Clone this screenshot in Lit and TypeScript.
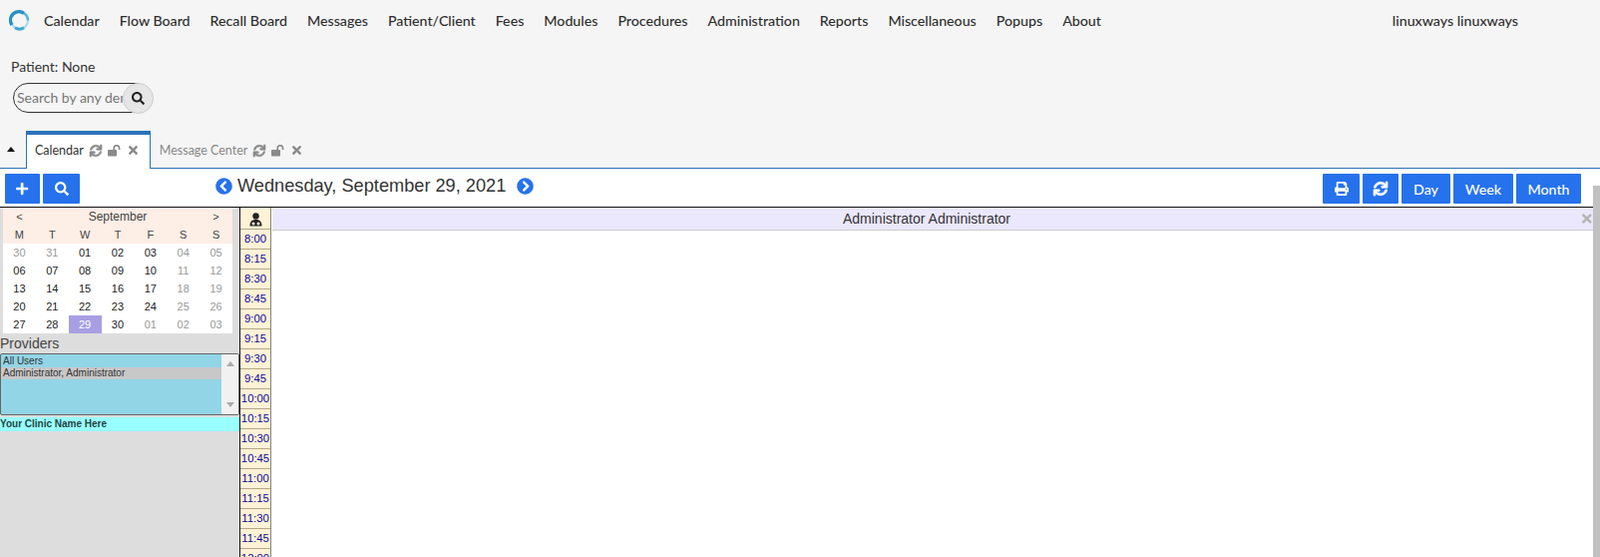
import { LitElement, html, css } from "lit";
import { customElement } from "lit/decorators.js";

const ic = (w: number, d: string, cls = "") =>
  html`<svg class="ic ${cls}" viewBox="0 0 ${w} 512"><path d=${d} fill="currentColor"></path></svg>`;

const P = {
  search: "M505 442.7L405.3 343c-4.5-4.5-10.6-7-17-7H372c27.6-35.3 44-79.7 44-128C416 93.1 322.9 0 208 0S0 93.1 0 208s93.1 208 208 208c48.3 0 92.7-16.4 128-44v16.3c0 6.4 2.5 12.5 7 17l99.7 99.7c9.4 9.4 24.6 9.4 33.9 0l28.3-28.3c9.4-9.4 9.4-24.6.1-34zM208 336c-70.7 0-128-57.2-128-128 0-70.7 57.2-128 128-128 70.7 0 128 57.2 128 128 0 70.7-57.2 128-128 128z",
  plus: "M416 208H272V64c0-17.67-14.33-32-32-32h-32c-17.67 0-32 14.33-32 32v144H32c-17.67 0-32 14.33-32 32v32c0 17.67 14.33 32 32 32h144v144c0 17.67 14.33 32 32 32h32c17.67 0 32-14.33 32-32V304h144c17.67 0 32-14.33 32-32v-32c0-17.67-14.33-32-32-32z",
  times: "M242.72 256l100.07-100.07c12.28-12.28 12.28-32.19 0-44.48l-22.24-22.24c-12.28-12.28-32.19-12.28-44.48 0L176 189.28 75.93 89.21c-12.28-12.28-32.19-12.28-44.48 0L9.21 111.45c-12.28 12.28-12.28 32.19 0 44.48L109.28 256 9.21 356.07c-12.28 12.28-12.28 32.19 0 44.48l22.24 22.24c12.28 12.28 32.2 12.28 44.48 0L176 322.72l100.07 100.07c12.28 12.28 32.2 12.28 44.48 0l22.24-22.24c12.28-12.28 12.28-32.19 0-44.48L242.72 256z",
  print: "M448 192V77.25c0-8.49-3.37-16.62-9.37-22.63L393.37 9.37c-6-6-14.14-9.37-22.63-9.37H96C78.33 0 64 14.33 64 32v160c-35.35 0-64 28.65-64 64v112c0 8.84 7.16 16 16 16h48v96c0 17.67 14.33 32 32 32h320c17.67 0 32-14.33 32-32v-96h48c8.84 0 16-7.16 16-16V256c0-35.35-28.65-64-64-64zm-64 256H128v-96h256v96zm0-224H128V64h192v48c0 8.84 7.16 16 16 16h48v96zm48 72c-13.25 0-24-10.75-24-24 0-13.26 10.75-24 24-24s24 10.74 24 24c0 13.25-10.75 24-24 24z",
  sync: "M440.65 12.57l4 82.77A247.16 247.16 0 0 0 255.83 8C134.73 8 33.91 94.92 12.29 209.82A12 12 0 0 0 24.09 224h49.05a12 12 0 0 0 11.67-9.26 175.91 175.91 0 0 1 317-56.94l-101.46-4.86a12 12 0 0 0-12.57 12v47.41a12 12 0 0 0 12 12H500a12 12 0 0 0 12-12V12a12 12 0 0 0-12-12h-47.37a12 12 0 0 0-11.98 12.57zM255.83 432a175.61 175.61 0 0 1-146-77.8l101.8 4.87a12 12 0 0 0 12.57-12v-47.4a12 12 0 0 0-12-12H12a12 12 0 0 0-12 12V500a12 12 0 0 0 12 12h47.35a12 12 0 0 0 12-12.6l-4.15-82.57A247.17 247.17 0 0 0 255.83 504c121.11 0 221.93-86.92 243.55-201.82a12 12 0 0 0-11.8-14.18h-49.05a12 12 0 0 0-11.67 9.26A175.86 175.86 0 0 1 255.83 432z",
  left: "M256 504C119 504 8 393 8 256S119 8 256 8s248 111 248 248-111 248-248 248zM142.1 273l135.5 135.5c9.4 9.4 24.6 9.4 33.9 0l17-17c9.4-9.4 9.4-24.6 0-33.9L226.9 256l101.6-101.6c9.4-9.4 9.4-24.6 0-33.9l-17-17c-9.4-9.4-24.6-9.4-33.9 0L142.1 239c-9.4 9.4-9.4 24.6 0 34z",
  right: "M256 8c137 0 248 111 248 248S393 504 256 504 8 393 8 256 119 8 256 8zm113.9 231L234.4 103.5c-9.4-9.4-24.6-9.4-33.9 0l-17 17c-9.4 9.4-9.4 24.6 0 33.9L285.1 256 183.5 357.6c-9.4 9.4-9.4 24.6 0 33.9l17 17c9.4 9.4 24.6 9.4 33.9 0L369.9 273c9.4-9.4 9.4-24.6 0-34z",
};

const unlock = html`<svg class="unlock" viewBox="0 0 13 12">
  <rect x="0" y="5" width="9" height="6.5" rx="0.8" fill="currentColor"></rect>
  <path d="M6.2 5.5 V3.4 A2.6 2.6 0 0 1 11.6 3.4 V5" fill="none" stroke="currentColor" stroke-width="1.7"></path>
</svg>`;

const tabIcons = html`${ic(512, P.sync, "bold")}${unlock}${ic(352, P.times, "close")}`;

const NAV = ["Calendar", "Flow Board", "Recall Board", "Messages", "Patient/Client", "Fees", "Modules", "Procedures", "Administration", "Reports", "Miscellaneous", "Popups", "About"];
const TIMES = ["8:00", "8:15", "8:30", "8:45", "9:00", "9:15", "9:30", "9:45", "10:00", "10:15", "10:30", "10:45", "11:00", "11:15", "11:30", "11:45", "12:00"];
const WEEKS: [string, boolean][][] = [
  ["30", "31", "01", "02", "03", "04", "05"],
  ["06", "07", "08", "09", "10", "11", "12"],
  ["13", "14", "15", "16", "17", "18", "19"],
  ["20", "21", "22", "23", "24", "25", "26"],
  ["27", "28", "29", "30", "01", "02", "03"],
].map((w, r) =>
  w.map((d, c) => [d, c >= 5 || (r === 0 && c < 2) || (r === 4 && c >= 4)] as [string, boolean])
);

@customElement("app-root")
export class AppRoot extends LitElement {
  static styles = css`
    :host { display: block; width: 1604px; height: 558px; overflow: hidden; background: #f5f5f5; font-family: Lato, sans-serif; color: #333; }
    .ic { display: block; height: 1em; flex: none; overflow: visible; }
    .bold path { stroke: currentColor; stroke-width: 26; }
    .nav { height: 41px; display: flex; align-items: center; padding-left: 9px; font-size: 14.2px; font-weight: 500; color: #2f2f2f; }
    .logo { width: 21px; height: 21px; margin-right: 14px; margin-top: -1px; }
    .nav-item { margin-right: 20px; white-space: nowrap; }
    .user { margin-left: auto; margin-right: 82px; white-space: nowrap; }
    .patient { height: 21px; padding: 17px 0 0 11px; font-size: 14px; line-height: 17px; color: #333; }
    .search-row { padding: 4px 0 0 13px; height: 30px; display: flex; }
    .search { width: 125px; height: 28px; border: 1px solid #333; border-radius: 15px 0 0 15px; display: flex; align-items: center; overflow: hidden; background: #f5f5f5; flex: none; }
    .search input { width: 106px; height: 26px; border: 0; outline: 0; padding: 0 0 0 3px; margin: -1px 0 0; background: transparent; font-family: Lato, sans-serif; font-size: 14px; box-sizing: content-box; }
    .search input::placeholder { color: #777; opacity: 1; }
    .search-btn { width: 31px; height: 31px; box-sizing: border-box; border-radius: 50%; background: #e6e6e6; border: 1px solid #ccc; margin: 0 0 0 -17px; display: flex; align-items: center; justify-content: center; font-size: 13px; color: #222; flex: none; position: relative; }
    .tabs { height: 37px; margin-top: 18px; display: flex; border-bottom: 1px solid #2a72b8; align-items: stretch; }
    .caret { width: 22px; padding-right: 4px; display: flex; align-items: center; justify-content: center; }
    .caret i { border: 4px solid transparent; border-top: 0; border-bottom: 5px solid #111; display: block; }
    .tab { display: flex; align-items: center; gap: 6px; padding: 2px 11px 0 9px; font-size: 12.5px; color: #888; white-space: nowrap; }
    .tab .ic { font-size: 12px; color: #8a8a8a; }
    .tab .close { font-size: 13px; margin-left: 2px; }
    .unlock { display: block; width: 13px; height: 12px; flex: none; color: #8a8a8a; }
    .tab.active { background: #fff; color: #333; border: 1px solid #2a72b8; border-top: 4px solid #2a72b8; border-bottom: 0; margin-bottom: -1px; padding: 0 12px 3px 8px; }
    .body { background: #fff; height: 389px; position: relative; overflow: hidden; }
    .toolbar { height: 39px; box-sizing: border-box; padding: 5px 19px 0 5px; display: flex; gap: 3px; border-bottom: 1px solid #111; position: relative; }
    .btn { height: 30px; background: #2672ec; color: #fff; display: flex; align-items: center; justify-content: center; font-size: 14.2px; font-weight: 500; border-radius: 1px; flex: none; }
    .btn .ic { font-size: 14px; }
    .w35 { width: 35px; } .w36 { width: 36px; } .w37 { width: 37px; } .w49 { width: 49px; } .w60 { width: 60px; } .w65 { width: 65px; }
    .date { display: flex; align-items: center; margin-left: 133px; height: 25px; color: #333; font-family: "Liberation Sans", Arial, sans-serif; font-size: 18.2px; white-space: nowrap; gap: 5px; }
    .date .ic { font-size: 17px; color: #2672ec; }
    .date .next { margin-left: 6px; }
    .right { margin-left: auto; display: flex; gap: 3px; }
    .grid { display: flex; height: 350px; font-family: "Liberation Sans", Arial, sans-serif; }
    .side { width: 240px; background: #ddd; flex: none; }
    .cal { margin-left: 3px; width: 230px; background: #fff; font-size: 11px; color: #222; }
    .cal-head { background: #fdeee6; color: #444; }
    .cal-row { display: grid; grid-template-columns: repeat(7, 1fr); height: 18px; line-height: 18px; text-align: center; }
    .month { grid-column: span 5; font-size: 12px; }
    .off { color: #999; }
    .sel { background: #a89fe3; color: #fff; }
    .prov-label { font-size: 14px; height: 19px; padding-top: 1px; line-height: 18px; color: #444; }
    .list { height: 60px; border: 1px solid #666; width: 238px; background: #92d5e6; display: flex; font-size: 10px; color: #333; border-radius: 2px; }
    .opts { flex: 1; padding-top: 1px; }
    .opt { height: 12px; line-height: 12px; padding-left: 2px; }
    .opt.on { background: #c8c8c8; }
    .sb { width: 17px; background: #f1f1f1; display: flex; flex-direction: column; justify-content: space-between; align-items: center; padding: 7px 0; box-sizing: border-box; }
    .sb i { display: block; border: 4px solid transparent; }
    .sb .up { border-top: 0; border-bottom: 5px solid #aaa; }
    .sb .dn { border-bottom: 0; border-top: 5px solid #aaa; }
    .clinic { margin-top: 2px; height: 14px; line-height: 14px; background: #99ffff; font-size: 10px; font-weight: 700; color: #244; }
    .vline { width: 1px; background: #111; flex: none; }
    .times { width: 30px; flex: none; background: #fff2d6; border-right: 1px solid #8a8270; color: #0a0aa0; font-size: 11.3px; text-align: center; overflow: hidden; }
    .t-head { height: 18px; padding-top: 3px; border-bottom: 1px solid #b5a888; display: flex; align-items: center; justify-content: center; }
    .t { height: 19px; line-height: 19px; border-bottom: 1px solid #b5a888; }
    .main { flex: 1; margin-left: 1px; margin-right: 7px; min-width: 0; position: relative; }
    .main-head { height: 22px; line-height: 22px; background: #ebe8fd; border-bottom: 1px solid #ccc; text-align: center; font-size: 14px; color: #333; padding-right: 12px; }
    .x { position: absolute; right: 1px; top: 4px; font-size: 14px; color: #b5b5b5; }
    .scroll { position: absolute; right: 0; top: 17px; width: 7px; bottom: 0; background: #c1c1c1; }
  `;

  render() {
    return html`
      <div class="nav">
        <svg class="logo" viewBox="0 0 21 21">
          <circle cx="10.5" cy="10.5" r="8.5" fill="none" stroke="#a8dbeb" stroke-width="2.2"></circle>
          <path d="M3 15 A8.5 8.5 0 0 1 15 3.3" fill="none" stroke="#2a8fc4" stroke-width="3.4"></path>
          <path d="M6 17.8 A8.5 8.5 0 0 0 15 17.8" fill="none" stroke="#3fa6d2" stroke-width="3"></path>
          <path d="M15 3.3 A8.5 8.5 0 0 1 19 10.5" fill="none" stroke="#57b4d8" stroke-width="2.4"></path>
        </svg>
        ${NAV.map((n) => html`<span class="nav-item">${n}</span>`)}
        <span class="user">linuxways linuxways</span>
      </div>
      <div class="patient">Patient: None</div>
      <div class="search-row">
        <div class="search"><input placeholder="Search by any demographics" /></div>
        <div class="search-btn">${ic(512, P.search)}</div>
      </div>
      <div class="tabs">
        <div class="caret"><i></i></div>
        <div class="tab active">Calendar ${tabIcons}</div>
        <div class="tab">Message Center ${tabIcons}</div>
      </div>
      <div class="body">
        <div class="toolbar">
          <div class="btn w35">${ic(448, P.plus)}</div>
          <div class="btn w37">${ic(512, P.search)}</div>
          <div class="date">${ic(512, P.left)}<span>Wednesday, September 29, 2021</span>${ic(512, P.right, "next")}</div>
          <div class="right">
            <div class="btn w37">${ic(512, P.print)}</div>
            <div class="btn w36">${ic(512, P.sync, "bold")}</div>
            <div class="btn w49">Day</div>
            <div class="btn w60">Week</div>
            <div class="btn w65">Month</div>
          </div>
        </div>
        <div class="grid">
          <div class="side">
            <div class="cal">
              <div class="cal-head">
                <div class="cal-row"><span>&lt;</span><span class="month">September</span><span>&gt;</span></div>
                <div class="cal-row">${["M", "T", "W", "T", "F", "S", "S"].map((d) => html`<span>${d}</span>`)}</div>
              </div>
              ${WEEKS.map((w, r) => html`<div class="cal-row">
                ${w.map(([d, off], c) => html`<span class="${off ? "off" : ""} ${r === 4 && c === 2 ? "sel" : ""}">${d}</span>`)}
              </div>`)}
            </div>
            <div class="prov-label">Providers</div>
            <div class="list">
              <div class="opts">
                <div class="opt">All Users</div>
                <div class="opt on">Administrator, Administrator</div>
              </div>
              <div class="sb"><i class="up"></i><i class="dn"></i></div>
            </div>
            <div class="clinic">Your Clinic Name Here</div>
          </div>
          <div class="vline"></div>
          <div class="times">
            <div class="t-head">
              <svg width="13" height="14" viewBox="0 0 13 14">
                <circle cx="6.5" cy="3.5" r="3.2" fill="#222"></circle>
                <path d="M0.5 13.5 C0.5 8.5 3 7 6.5 7 C10 7 12.5 8.5 12.5 13.5Z" fill="#222"></path>
                <circle cx="4" cy="11" r="1.5" fill="#fff2d6"></circle>
                <circle cx="9" cy="11" r="1.5" fill="#fff2d6"></circle>
              </svg>
            </div>
            ${TIMES.map((t) => html`<div class="t">${t}</div>`)}
          </div>
          <div class="main">
            <div class="main-head">Administrator Administrator</div>
            <div class="x">${ic(352, P.times)}</div>
          </div>
        </div>
        <div class="scroll"></div>
      </div>
    `;
  }
}
